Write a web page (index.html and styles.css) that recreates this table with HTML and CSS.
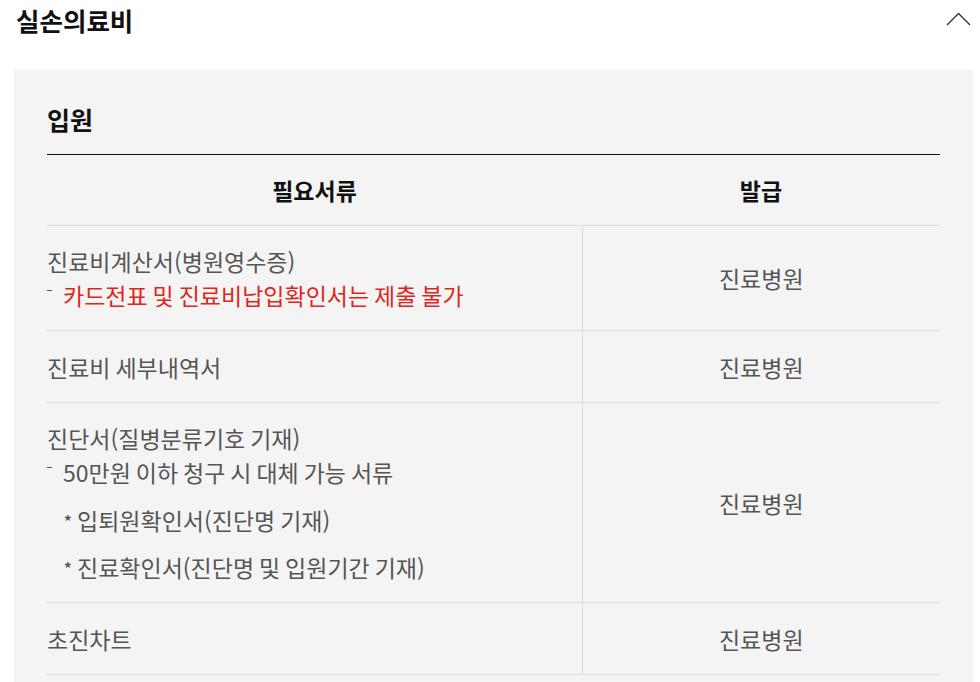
FILE: index.html
```html
<!DOCTYPE html>
<html lang="ko">
<head>
<meta charset="utf-8">
<link rel="stylesheet" href="styles.css">
</head>
<body>
<section class="acc">
  <div class="acc-head">
    <h2 class="acc-title">실손의료비</h2>
    <svg class="chev" width="26" height="14" viewBox="0 0 26 14"><polyline points="1,13 12.5,1.5 24,13" fill="none" stroke="#333" stroke-width="1.4"/></svg>
  </div>
  <div class="acc-body">
    <h3 class="sub">입원</h3>
    <table class="docs">
      <thead>
        <tr><th class="c1">필요서류</th><th class="c2">발급</th></tr>
      </thead>
      <tbody>
        <tr>
          <td class="c1">
            <p>진료비계산서(병원영수증)</p>
            <p class="dash red">카드전표 및 진료비납입확인서는 제출 불가</p>
          </td>
          <td class="c2">진료병원</td>
        </tr>
        <tr class="single">
          <td class="c1"><p>진료비 세부내역서</p></td>
          <td class="c2">진료병원</td>
        </tr>
        <tr>
          <td class="c1">
            <p>진단서(질병분류기호 기재)</p>
            <p class="dash">50만원 이하 청구 시 대체 가능 서류</p>
            <p class="star">입퇴원확인서(진단명 기재)</p>
            <p class="star">진료확인서(진단명 및 입원기간 기재)</p>
          </td>
          <td class="c2">진료병원</td>
        </tr>
        <tr class="single">
          <td class="c1"><p>초진차트</p></td>
          <td class="c2">진료병원</td>
        </tr>
      </tbody>
    </table>
  </div>
</section>
</body>
</html>
```
FILE: styles.css
```css
* { box-sizing: border-box; }
html, body { margin: 0; padding: 0; background: #fff; }
body {
  font-family: "Noto Sans CJK KR", "Noto Sans", sans-serif;
  color: #555;
}
.acc { width: 959px; margin-left: 14px; }
.acc-head {
  height: 70px;
  display: flex;
  justify-content: space-between;
  align-items: flex-start;
}
.acc-title {
  margin: 0;
  padding-left: 2px;
  font-size: 25.5px;
  line-height: 40px;
  font-weight: 700;
  color: #111;
}
.chev { margin-top: 12px; margin-right: 1px; }
.acc-body {
  background: #f4f4f4;
  padding: 34px 33px 0 33px;
  min-height: 620px;
}
.sub {
  margin: 0 0 20px;
  font-size: 25px;
  line-height: 30px;
  font-weight: 700;
  color: #111;
}
.docs {
  width: 100%;
  border-collapse: collapse;
  border-top: 1px solid #111;
}
.docs th {
  height: 71px;
  font-size: 23px;
  font-weight: 700;
  color: #111;
  text-align: center;
  border-bottom: 1px solid #ddd;
  padding: 0;
}
.docs th.c1 { width: 535px; }
.docs td {
  border-bottom: 1px solid #ddd;
  padding: 18px 0;
  font-size: 23px;
  line-height: 34px;
  word-spacing: -1.5px;
  vertical-align: middle;
}
.docs .single td { padding-top: 19px; padding-bottom: 18px; }
.docs td.c1 { border-right: 1px solid #ddd; text-align: left; }
.docs td.c2 { text-align: center; }
.docs p { margin: 0; }
.dash { position: relative; padding-left: 16px; }
.dash::before {
  content: "";
  position: absolute;
  left: 0;
  top: 12px;
  width: 5px;
  height: 1px;
  background: #555;
}
.red { color: #e0261c; }
.star { padding-left: 30px; margin-top: 13.5px !important; position: relative; }
.star::before {
  content: "*";
  position: absolute;
  left: 17px;
  top: 1px;
  font-size: 15px;
  font-weight: 700;
  color: #555;
}
```
